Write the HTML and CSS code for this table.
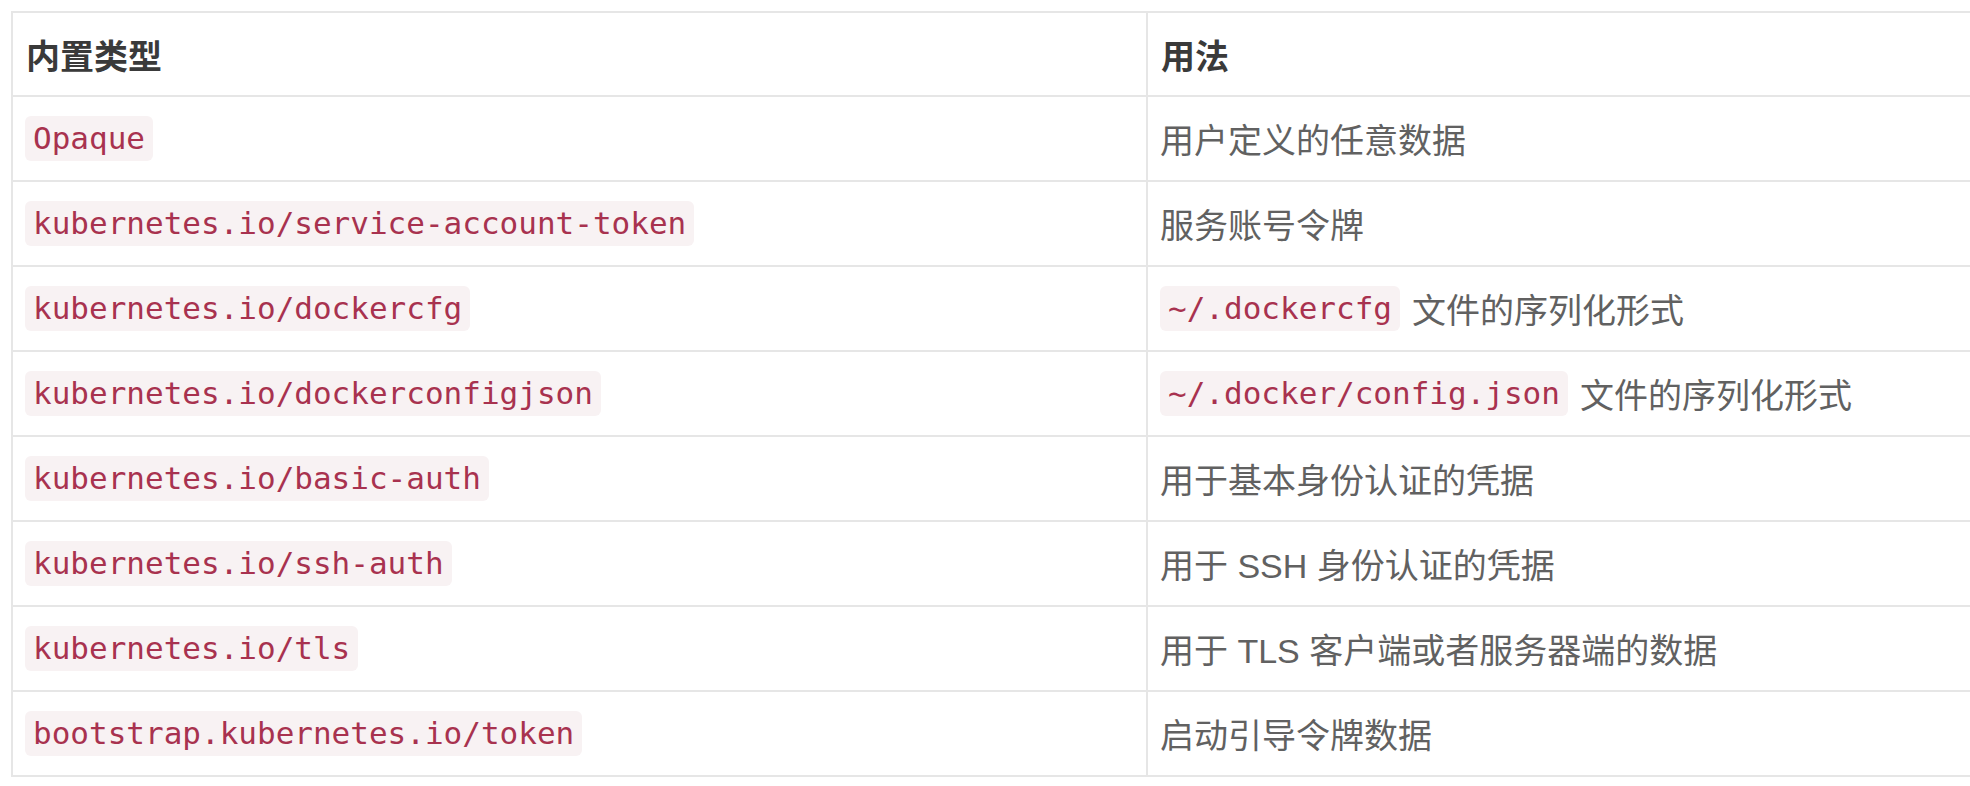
FILE: index.html
```html
<!DOCTYPE html>
<html lang="zh-CN">
<head>
<meta charset="utf-8">
<title>Secret 内置类型</title>
<link rel="stylesheet" href="styles.css">
</head>
<body>
<div class="table">
  <div class="cell head">内置类型</div>
  <div class="cell head">用法</div>

  <div class="cell"><code>Opaque</code></div>
  <div class="cell">用户定义的任意数据</div>

  <div class="cell"><code>kubernetes.io/service-account-token</code></div>
  <div class="cell">服务账号令牌</div>

  <div class="cell"><code>kubernetes.io/dockercfg</code></div>
  <div class="cell"><code>~/.dockercfg</code><span>文件的序列化形式</span></div>

  <div class="cell"><code>kubernetes.io/dockerconfigjson</code></div>
  <div class="cell"><code>~/.docker/config.json</code><span>文件的序列化形式</span></div>

  <div class="cell"><code>kubernetes.io/basic-auth</code></div>
  <div class="cell">用于基本身份认证的凭据</div>

  <div class="cell"><code>kubernetes.io/ssh-auth</code></div>
  <div class="cell">用于 SSH 身份认证的凭据</div>

  <div class="cell"><code>kubernetes.io/tls</code></div>
  <div class="cell">用于 TLS 客户端或者服务器端的数据</div>

  <div class="cell"><code>bootstrap.kubernetes.io/token</code></div>
  <div class="cell">启动引导令牌数据</div>
</div>
</body>
</html>
```

FILE: styles.css
```css
html, body {
  margin: 0;
  padding: 0;
  overflow: hidden;
  background: #ffffff;
}

body {
  font-family: "Liberation Sans", "Noto Sans CJK SC", sans-serif;
  font-size: 34px;
  color: #616161;
}

.table {
  display: grid;
  grid-template-columns: 1135px 900px;
  margin: 11px 0 0 11px;
  border-top: 2px solid #e6e6e6;
  border-left: 2px solid #e6e6e6;
  width: max-content;
}

.cell {
  box-sizing: border-box;
  height: 85px;
  display: flex;
  align-items: center;
  gap: 12px;
  padding-left: 12px;
  border-right: 2px solid #e6e6e6;
  border-bottom: 2px solid #e6e6e6;
  white-space: nowrap;
}

.cell.head {
  height: 84px;
  font-weight: 700;
  color: #3a3a3a;
  padding-left: 13px;
}

code {
  display: inline-block;
  font-family: "DejaVu Sans Mono", monospace;
  font-size: 31px;
  line-height: 37px;
  padding: 4px 8px;
  border-radius: 6px;
  background: #f8f2f3;
  color: #a8324f;
}
```
